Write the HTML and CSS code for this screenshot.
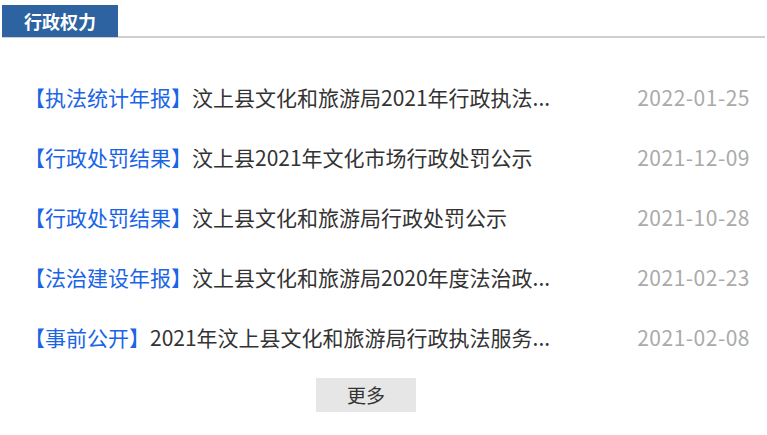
FILE: index.html
```html
<!doctype html>
<html lang="zh-CN">
<head>
  <meta charset="UTF-8" />
  <meta name="viewport" content="width=device-width, initial-scale=1.0" />
  <title>行政权力</title>
  <link rel="stylesheet" href="styles.css">
</head>
<body>
  <div class="panel">
    <div class="panel-head">
      <span class="panel-tab">行政权力</span>
    </div>

    <ul class="news-list">
      <li class="news-item">
        <a class="news-title" href="#"><span class="news-tag">【执法统计年报】</span>汶上县文化和旅游局2021年行政执法...</a>
        <span class="news-date">2022-01-25</span>
      </li>
      <li class="news-item">
        <a class="news-title" href="#"><span class="news-tag">【行政处罚结果】</span>汶上县2021年文化市场行政处罚公示</a>
        <span class="news-date">2021-12-09</span>
      </li>
      <li class="news-item">
        <a class="news-title" href="#"><span class="news-tag">【行政处罚结果】</span>汶上县文化和旅游局行政处罚公示</a>
        <span class="news-date">2021-10-28</span>
      </li>
      <li class="news-item">
        <a class="news-title" href="#"><span class="news-tag">【法治建设年报】</span>汶上县文化和旅游局2020年度法治政...</a>
        <span class="news-date">2021-02-23</span>
      </li>
      <li class="news-item">
        <a class="news-title" href="#"><span class="news-tag">【事前公开】</span>2021年汶上县文化和旅游局行政执法服务...</a>
        <span class="news-date">2021-02-08</span>
      </li>
    </ul>

    <div class="more-row">
      <a class="more-btn" href="#">更多</a>
    </div>
  </div>
</body>
</html>
```

FILE: styles.css
```css
* {
  box-sizing: border-box;
  margin: 0;
  padding: 0;
}

body {
  font-family: "Noto Sans CJK SC", "Noto Sans", sans-serif;
  background: #fff;
  color: #333;
}

a {
  text-decoration: none;
  color: inherit;
}

.panel {
  width: 767px;
  padding-top: 5px;
}

.panel-head {
  margin: 0 2px;
  display: flex;
  border-bottom: 2px solid #cfcfcf;
}

.panel-tab {
  width: 116px;
  height: 32px;
  margin-bottom: -1px;
  background: #2c63a0;
  color: #fff;
  font-size: 18px;
  font-weight: bold;
  line-height: 32px;
  text-align: center;
}

.news-list {
  list-style: none;
  padding: 29px 17px 0 24px;
}

.news-item {
  height: 60px;
  display: flex;
  align-items: center;
  justify-content: space-between;
  font-size: 21px;
}

.news-title {
  white-space: nowrap;
  color: #333;
}

.news-tag {
  color: #1a64e6;
}

.news-date {
  color: #aaa;
  letter-spacing: 0.5px;
}

.more-row {
  padding: 11px 0 0 316px;
}

.more-btn {
  display: block;
  width: 100px;
  height: 34px;
  background: #e6e6e6;
  color: #333;
  font-size: 19px;
  line-height: 34px;
  text-align: center;
}
```
